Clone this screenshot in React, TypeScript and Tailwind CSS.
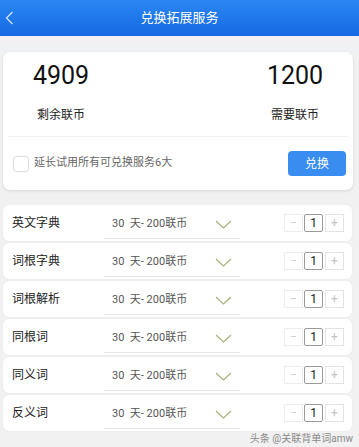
import React from 'react';

const services = ['英文字典', '词根字典', '词根解析', '同根词', '同义词', '反义词'];

const ChevronDown: React.FC = () => (
  <svg width="17" height="9" viewBox="0 0 17 9" fill="none">
    <path d="M1 1 L8.5 8 L16 1" stroke="#a9b27a" strokeWidth="1.2" />
  </svg>
);

const Stepper: React.FC = () => (
  <div className="flex items-center gap-px">
    <div className="w-[19px] h-[18px] border border-[#ebebeb] flex items-center justify-center text-[#cfcfcf] text-[12px] leading-none">
      −
    </div>
    <div className="w-[19px] h-[18px] border border-[#9a9a9a] rounded-[2px] flex items-center justify-center text-[#222] text-[12px] leading-none">
      1
    </div>
    <div className="w-[19px] h-[18px] border border-[#e3e3e3] ml-px flex items-center justify-center text-[#c4c4c4] text-[12px] leading-none">
      +
    </div>
  </div>
);

const App: React.FC = () => {
  return (
    <div
      className="w-[359px] h-[447px] bg-[#f1f1f1] overflow-hidden"
      style={{ fontFamily: 'Roboto, "Noto Sans CJK SC", sans-serif' }}
    >
      {/* Header */}
      <div className="h-[36px] bg-gradient-to-b from-[#2b87f3] to-[#1668e2] flex items-center relative">
        <svg className="absolute left-[5px] top-[11px]" width="9" height="14" viewBox="0 0 9 14" fill="none">
          <path d="M7.5 1 L1.5 7 L7.5 13" stroke="#cfe4ff" strokeWidth="1.3" />
        </svg>
        <div className="flex-1 text-center text-white text-[13px]">兑换拓展服务</div>
      </div>
      <div className="h-[16px] bg-gradient-to-b from-[#f4f0f2] to-[#eef1f5]" />

      {/* Coin card */}
      <div className="mx-[3px] w-[350px] bg-white rounded-[7px] shadow-[0_1px_3px_rgba(0,0,0,0.12)]">
        <div className="flex justify-between px-[18px] pt-[9px]">
          <div className="w-[80px] flex flex-col items-center">
            <div className="text-[25px] leading-[30px] text-[#111]">4909</div>
            <div className="mt-[16px] text-[12px] leading-[16px] text-[#222]">剩余联币</div>
          </div>
          <div className="w-[80px] flex flex-col items-center">
            <div className="text-[25px] leading-[30px] text-[#111]">1200</div>
            <div className="mt-[16px] text-[12px] leading-[16px] text-[#222]">需要联币</div>
          </div>
        </div>
        <div className="mx-[5px] mt-[13px] h-px bg-[#f1f1f1]" />
        <div className="flex items-center justify-between pl-[10px] pr-[7px] h-[53px]">
          <div className="flex items-center">
            <div className="w-[16px] h-[16px] rounded-[3px] border border-[#dcdcdc] bg-white" />
            <span className="ml-[5px] text-[11px] text-[#666]">延长试用所有可兑换服务6大</span>
          </div>
          <button className="w-[58px] h-[25px] rounded-[4px] bg-[#3a8df0] text-white text-[12px]">兑换</button>
        </div>
      </div>

      {/* Services */}
      <div className="mt-[15px] flex flex-col gap-[2px]">
        {services.map((name) => (
          <div
            key={name}
            className="mx-[3px] w-[349px] h-[36px] bg-white rounded-[6px] flex items-center shadow-[0_0_2px_rgba(0,0,0,0.05)]"
          >
            <div className="w-[101px] pl-[9px] text-[12px] text-[#222]">{name}</div>
            <div className="w-[136px] h-[28px] border-b border-[#e6e6e6] flex items-center justify-between pl-[8px] pr-[8px] mt-[3px]">
              <span className="text-[11px] text-[#555]">30&nbsp;&nbsp;天- 200联币</span>
              <ChevronDown />
            </div>
            <div className="ml-auto mr-[8px]">
              <Stepper />
            </div>
          </div>
        ))}
      </div>

      <div className="text-right pr-[6px] mt-[1px] text-[10px] leading-[14px] text-[#8a8a8a]">头条 @关联背单词amw</div>
    </div>
  );
};

export default App;
